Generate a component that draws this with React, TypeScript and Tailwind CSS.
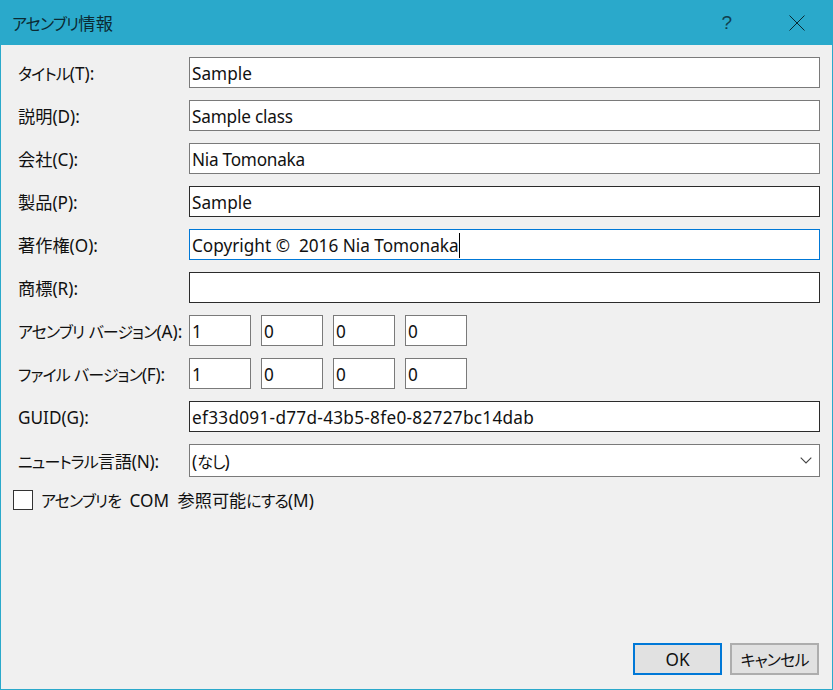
import React from "react";

function T({ s }: { s: string }) {
  const parts = s.split(/([\u3040-\u30ff]+)/);
  return (
    <>
      {parts.map((p, i) =>
        i % 2 === 1 ? (
          <span key={i} className="text-[16px] tracking-[-0.9px]">{p}</span>
        ) : (
          <span key={i}>{p}</span>
        )
      )}
    </>
  );
}

function Label({ s, track }: { s: string; track?: string }) {
  return (
    <div className={`w-[171px] shrink-0 leading-[20px] whitespace-nowrap pt-[2px] ${track ?? ""}`}>
      <T s={s} />
    </div>
  );
}

function Field({ label, value, border, caret, tall, chevron, track, labelTrack }: { label: string; value: string; border: string; caret?: boolean; tall?: boolean; chevron?: boolean; track?: string; labelTrack?: string }) {
  return (
    <div className="flex items-center">
      <Label s={label} track={labelTrack} />
      <div className={`flex flex-1 items-center bg-white border pl-[2px] pr-[7px] whitespace-pre ${tall ? "h-[33px]" : "h-[31px]"} ${border}`}>
        <span className={`flex-1 leading-[25px] pt-[2px] ${track ?? ""}`}>
          <T s={value} />
          {caret && <span className="inline-block w-[1px] h-[25px] bg-black align-middle -mt-[3px]" />}
        </span>
        {chevron && (
          <svg width="12" height="7" viewBox="0 0 12 7" fill="none" stroke="#444" strokeWidth="1.1">
            <path d="M0.7 0.7 L6 6 L11.3 0.7" />
          </svg>
        )}
      </div>
    </div>
  );
}

function Version({ label, values, labelTrack }: { label: string; values: string[]; labelTrack?: string }) {
  return (
    <div className="flex items-center">
      <Label s={label} track={labelTrack} />
      <div className="flex gap-[10px]">
        {values.map((v, i) => (
          <div key={i} className="flex items-center w-[62px] h-[31px] bg-white border border-[#7a7a7a] pl-[2px] pt-[2px]">
            {v}
          </div>
        ))}
      </div>
    </div>
  );
}

export default function App() {
  return (
    <div
      className="flex flex-col w-[833px] h-[690px] bg-[#f0f0f0] border border-[#2aa9cb] border-t-0 text-[#111] text-[17.2px] overflow-hidden [font-feature-settings:'palt']"
      style={{ fontFamily: '"Noto Sans", "Noto Sans CJK JP", sans-serif' }}
    >
      <div className="flex items-center h-[45px] shrink-0 bg-[#2aa9cb] pl-[11px] relative">
        <span className="text-[#0b2a33] pt-[2px] tracking-[0.4px]"><T s="アセンブリ情報" /></span>
        <div className="flex items-center ml-auto">
          <span className="text-[19px] text-[#10404f] mr-[57px] pt-[2px]" style={{ fontFamily: '"Liberation Sans", sans-serif' }}>?</span>
          <svg className="mr-[27px]" width="16" height="16" viewBox="0 0 16 16" fill="none" stroke="#0a2a33" strokeWidth="1">
            <path d="M0.5 0.5 L15.5 15.5 M15.5 0.5 L0.5 15.5" />
          </svg>
        </div>
      </div>

      <div className="flex flex-col gap-[12px] pt-[12px] pl-[17px] pr-[12px]">
        <Field label="タイトル(T):" value="Sample" border="border-[#7a7a7a]" />
        <Field label="説明(D):" value="Sample class" border="border-[#7a7a7a]" track="tracking-[-0.2px]" />
        <Field label="会社(C):" value="Nia Tomonaka" border="border-[#7a7a7a]" track="tracking-[-0.25px]" />
        <Field label="製品(P):" value="Sample" border="border-[#2b2b2b]" />
        <Field label="著作権(O):" value="Copyright ©  2016 Nia Tomonaka" border="border-[#0078d7]" caret />
        <Field label="商標(R):" value="" border="border-[#2b2b2b]" />
        <Version label="アセンブリ バージョン(A):" values={["1", "0", "0", "0"]} />
        <Version label="ファイル バージョン(F):" values={["1", "0", "0", "0"]} labelTrack="tracking-[-0.2px]" />
        <Field label="GUID(G):" value="ef33d091-d77d-43b5-8fe0-82727bc14dab" border="border-[#2b2b2b]" track="tracking-[0.28px]" />
        <Field label="ニュートラル言語(N):" value="(なし)" border="border-[#7a7a7a]" tall chevron labelTrack="tracking-[-0.2px]" />
      </div>

      <div className="flex items-center mt-[12px] pl-[12px]">
        <div className="w-[20px] h-[20px] bg-white border border-[#333]" />
        <span className="ml-[8px] leading-[20px] pt-[2px] [word-spacing:4px]"><T s="アセンブリを COM 参照可能にする(M)" /></span>
      </div>

      <div className="flex justify-end gap-[8px] mt-auto pr-[13px] pb-[14px]">
        <button className="w-[89px] h-[32px] bg-[#e1e1e1] border-2 border-[#0078d7] pt-[2px]">OK</button>
        <button className="w-[89px] h-[32px] bg-[#e1e1e1] border-2 border-[#adadad] pt-[2px]"><T s="キャンセル" /></button>
      </div>
    </div>
  );
}
